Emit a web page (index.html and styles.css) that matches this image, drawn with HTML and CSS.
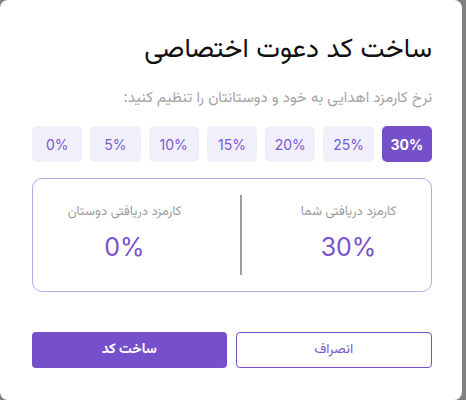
FILE: index.html
```html
<!DOCTYPE html>
<html lang="fa">
<head>
    <meta charset="UTF-8">
    <meta name="viewport" content="width=device-width, initial-scale=1.0">
    <title>ساخت کد دعوت</title>
    <link rel="stylesheet" href="styles.css">
</head>
<body>
    <!-- پنجره ساخت کد دعوت -->
    <div class="modal" dir="rtl">
        <h1 class="title">ساخت کد دعوت اختصاصی</h1>
        <p class="subtitle">نرخ کارمزد اهدایی به خود و دوستانتان را تنظیم کنید:</p>

        <div class="rates">
            <button class="rate active">30%</button>
            <button class="rate">25%</button>
            <button class="rate">20%</button>
            <button class="rate">15%</button>
            <button class="rate">10%</button>
            <button class="rate">5%</button>
            <button class="rate">0%</button>
        </div>

        <div class="share">
            <div class="share-col mine">
                <span class="share-label">کارمزد دریافتی شما</span>
                <span class="share-value">30%</span>
            </div>
            <div class="divider"></div>
            <div class="share-col friends">
                <span class="share-label">کارمزد دریافتی دوستان</span>
                <span class="share-value">0%</span>
            </div>
        </div>

        <div class="actions">
            <button class="btn btn-outline">انصراف</button>
            <button class="btn btn-primary">ساخت کد</button>
        </div>
    </div>
</body>
</html>
```

FILE: styles.css
```css
body {
    margin: 0;
    padding: 0;
    background-color: #7f7f7f;
    font-family: Inter, "Vazirmatn", "Noto Sans Arabic", "DejaVu Sans", sans-serif;
}

.modal {
    box-sizing: border-box;
    width: 462px;
    height: 400px;
    background-color: white;
    border-radius: 8px;
    padding: 30px 30px 0 32px;
}

.title {
    margin: 0;
    font-size: 27px;
    font-weight: 400;
    color: #111;
    line-height: 36px;
}

.subtitle {
    margin: 20px 0 0;
    font-size: 15px;
    color: #a3a3a3;
    line-height: 22px;
}

.rates {
    display: flex;
    gap: 8px;
    margin-top: 18px;
}

.rate {
    flex: 1;
    height: 36px;
    border: none;
    border-radius: 5px;
    background-color: #f0effa;
    color: #7a5bd0;
    font-family: Inter, sans-serif;
    font-size: 14px;
    cursor: pointer;
}

.rate.active {
    background-color: #7650ca;
    color: white;
    font-weight: 700;
}

.share {
    box-sizing: border-box;
    display: grid;
    grid-template-columns: 189fr 2px 207fr;
    align-items: center;
    margin-top: 16px;
    height: 114px;
    border: 1px solid #b9a9e8;
    border-radius: 10px;
}

.share-col {
    display: flex;
    flex-direction: column;
    align-items: center;
    gap: 10px;
    padding-bottom: 6px;
}

.share-col.mine {
    padding-inline-end: 24px;
}

.share-col.friends {
    padding-inline-start: 24px;
}

.share-label {
    font-size: 13px;
    color: #9d9d9d;
}

.share-value {
    font-family: Inter, sans-serif;
    font-size: 25px;
    color: #7a52cc;
}

.divider {
    width: 2px;
    height: 80px;
    background-color: #9e9e9e;
}

.actions {
    display: flex;
    gap: 9px;
    margin-top: 40px;
}

.btn {
    flex: 1;
    height: 36px;
    border-radius: 4px;
    font-family: inherit;
    font-size: 14px;
    cursor: pointer;
}

.btn-outline {
    background-color: white;
    border: 1px solid #7650ca;
    color: #7a5bd0;
}

.btn-primary {
    background-color: #7650ca;
    border: none;
    color: white;
    font-weight: 700;
}
```
